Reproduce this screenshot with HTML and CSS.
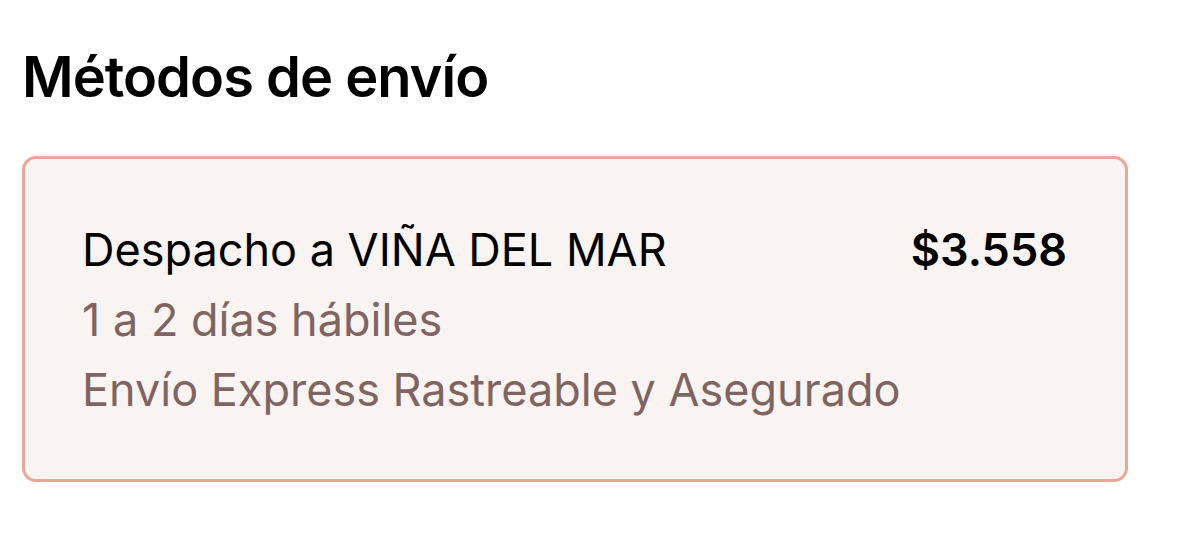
FILE: index.html
```html
<!DOCTYPE html>
<html lang="es">
<head>
    <meta charset="UTF-8">
    <meta name="viewport" content="width=device-width, initial-scale=1.0">
    <title>Métodos de envío</title>
    <link rel="stylesheet" href="styles.css">
</head>
<body>
    <!--shipping methods section-->
    <section class="shipping">
        <h2 class="shipping-title">Métodos de envío</h2>

        <!--selected shipping option-->
        <div class="shipping-option">
            <div class="option-row">
                <span class="option-name">Despacho a VIÑA DEL MAR</span>
                <span class="option-price">$3.558</span>
            </div>
            <p class="option-detail">1 a 2 días hábiles</p>
            <p class="option-detail">Envío Express Rastreable y Asegurado</p>
        </div>
    </section>
</body>
</html>
```

FILE: styles.css
```css
/* page base */
body {
    margin: 0;
    background-color: white;
    font-family: Inter, "Noto Sans", sans-serif;
    color: black;
}

/* wrapper for the whole block */
.shipping {
    padding: 43px 62px 0 22px;
}

/* section heading */
.shipping-title {
    margin: 0 0 45px 0;
    font-size: 56px;
    font-weight: 600;
    line-height: 68px;
    letter-spacing: -1px;
}

/* the option card */
.shipping-option {
    background-color: #f9f4f2;
    border: 3px solid #e9a699;
    border-radius: 14px;
    padding: 56px 58px 54px 57px;
}

/* name and price on one line */
.option-row {
    display: flex;
    justify-content: space-between;
    align-items: baseline;
    font-size: 45px;
    line-height: 70px;
}

.option-price {
    font-weight: 600;
}

/* smaller grey lines below */
.option-detail {
    margin: 0;
    font-size: 45px;
    line-height: 70px;
    color: #7f6562;
}
```
